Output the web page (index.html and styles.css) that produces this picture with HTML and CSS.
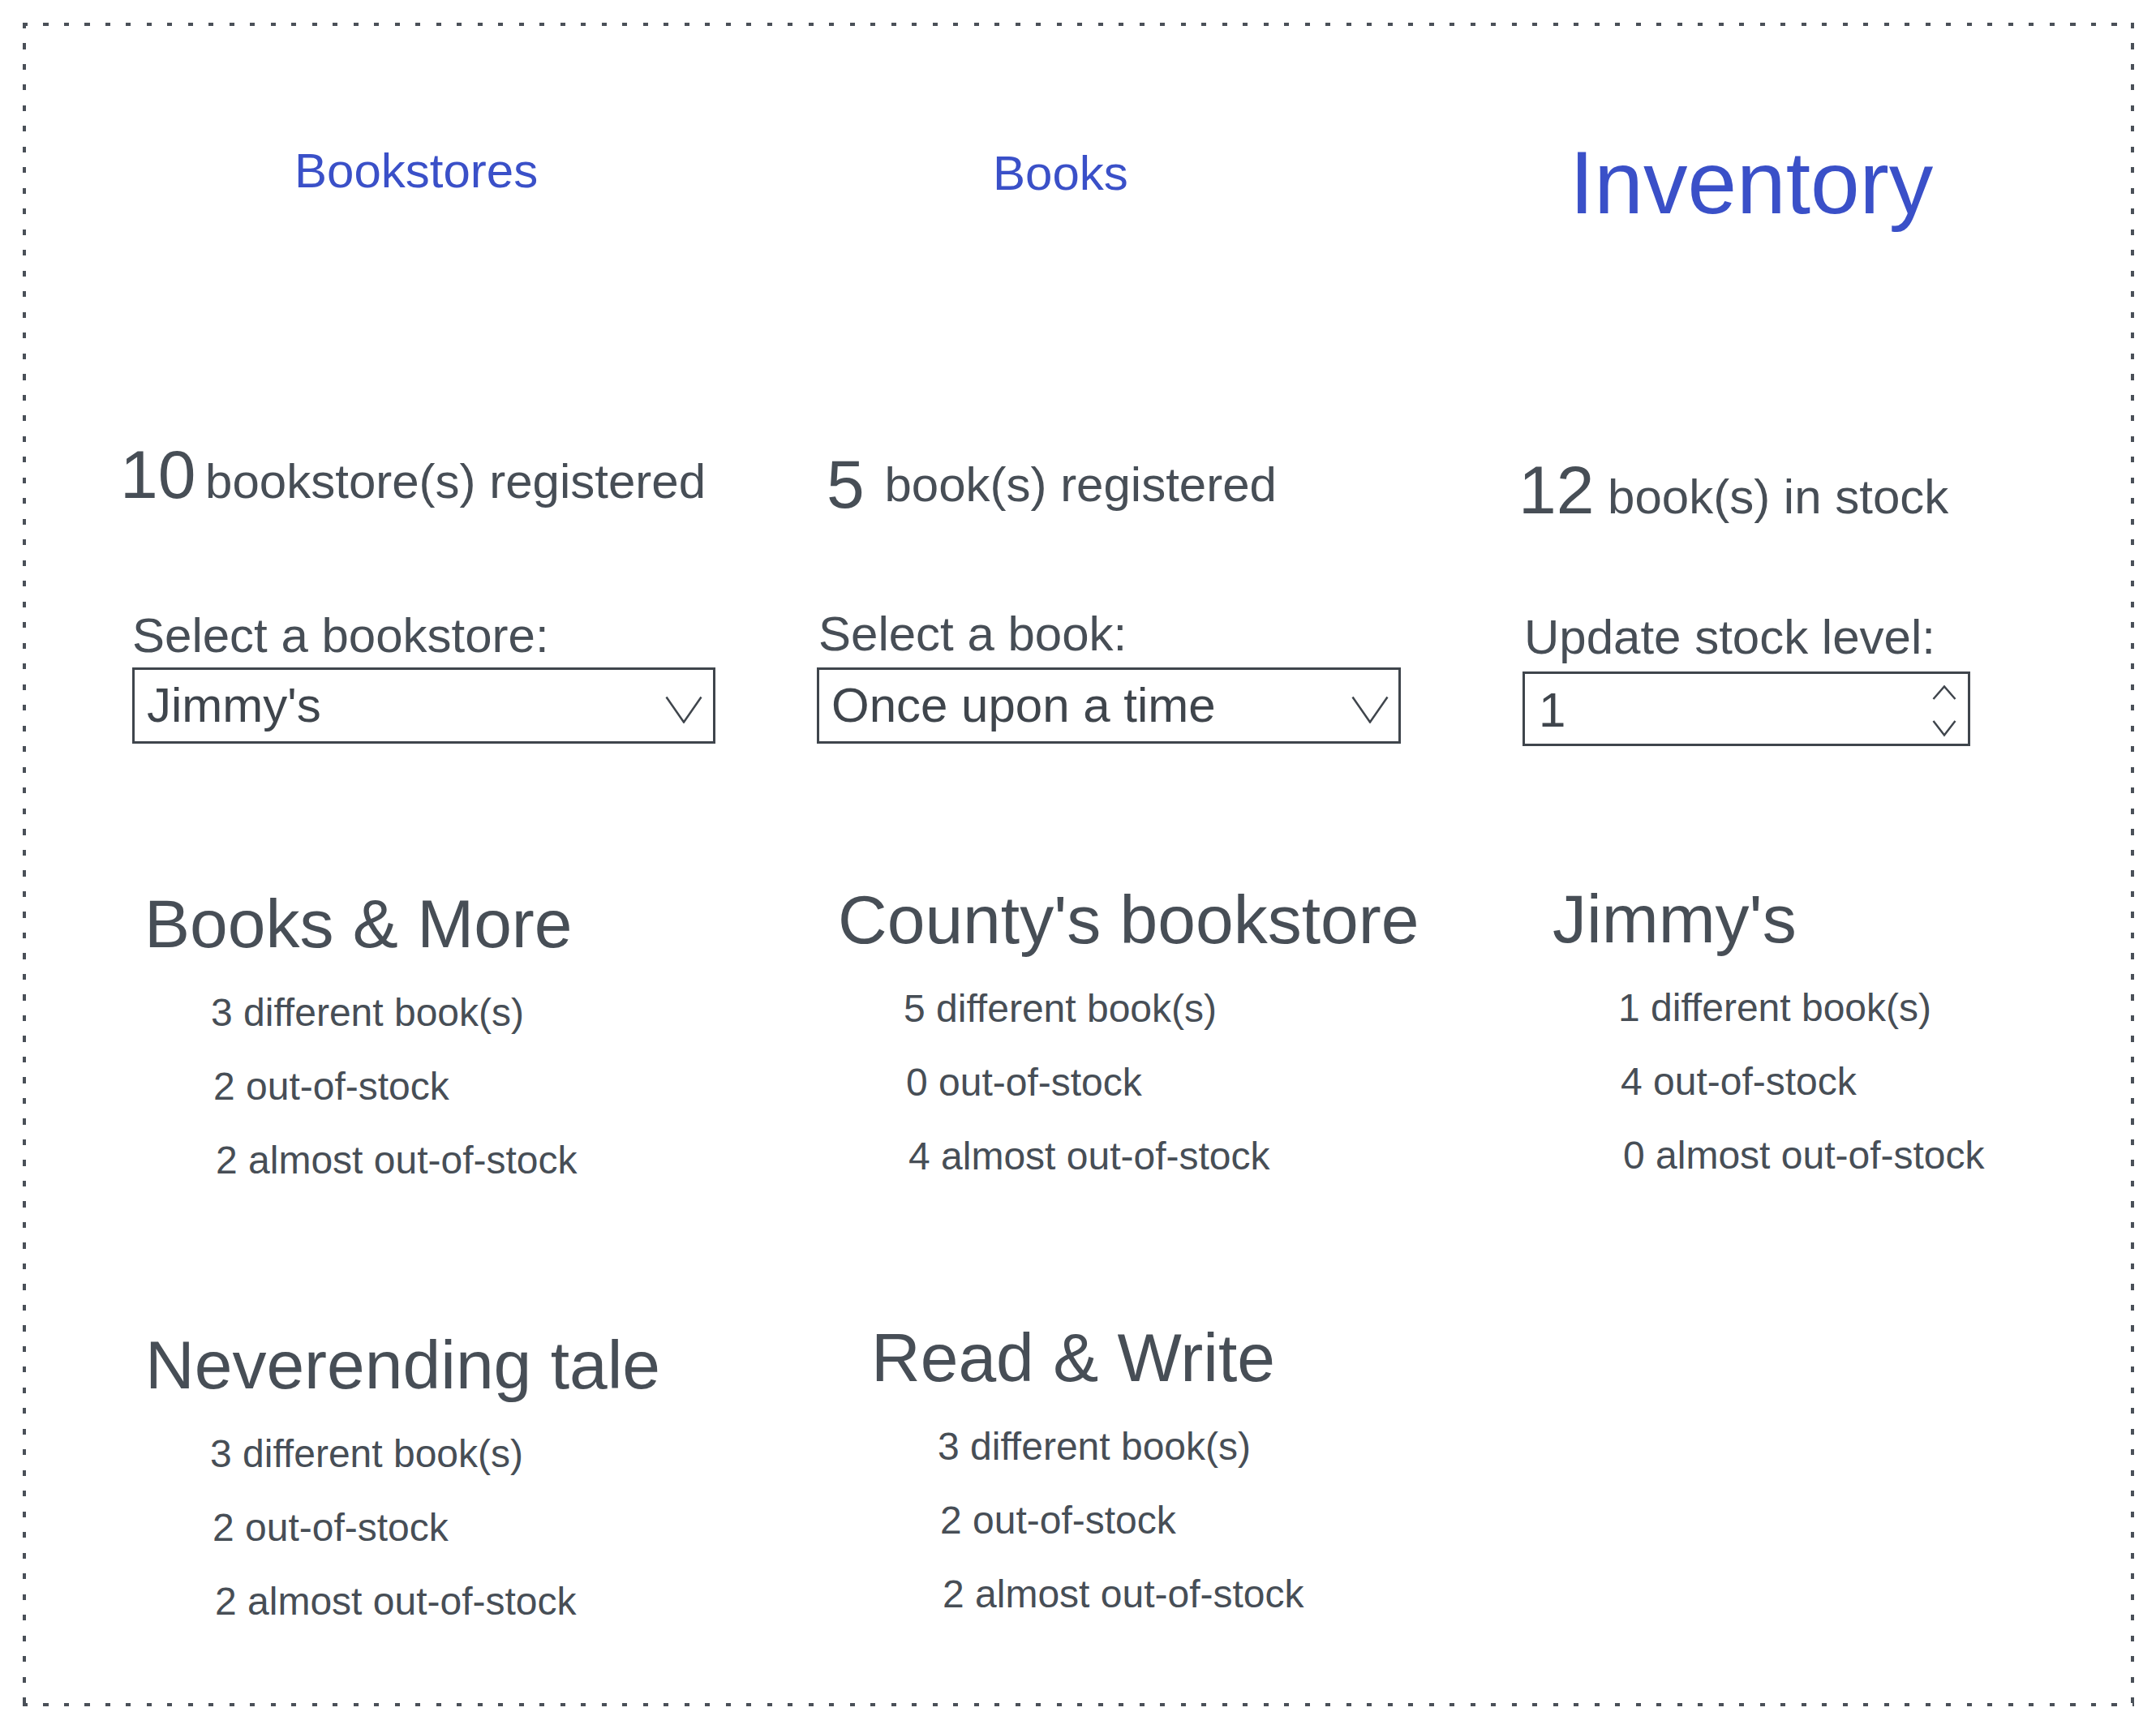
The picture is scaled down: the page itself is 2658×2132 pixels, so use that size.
FILE: index.html
```html
<!DOCTYPE html>
<html lang="en">
<head>
<meta charset="utf-8">
<title>Bookstore inventory</title>
<link rel="stylesheet" href="styles.css">
</head>
<body>
<main class="frame">
  <section class="col col--stores">
    <a class="tab" href="#">Bookstores</a>
    <p class="stat"><span class="num">10</span> bookstore(s) registered</p>
    <label class="label">Select a bookstore:</label>
    <div class="select">
      <span class="value">Jimmy's</span>
      <svg class="chev" width="46" height="34" viewBox="0 0 46 34"><polyline points="1.5,1.5 23,32.5 44.5,1.5"/></svg>
    </div>
    <article class="store store--a">
      <h2>Books &amp; More</h2>
      <ul class="facts">
        <li>3 different book(s)</li>
        <li>2 out-of-stock</li>
        <li>2 almost out-of-stock</li>
      </ul>
    </article>
    <article class="store store--b">
      <h2>Neverending tale</h2>
      <ul class="facts">
        <li>3 different book(s)</li>
        <li>2 out-of-stock</li>
        <li>2 almost out-of-stock</li>
      </ul>
    </article>
  </section>

  <section class="col col--books">
    <a class="tab" href="#">Books</a>
    <p class="stat"><span class="num">5</span> book(s) registered</p>
    <label class="label">Select a book:</label>
    <div class="select">
      <span class="value">Once upon a time</span>
      <svg class="chev" width="46" height="34" viewBox="0 0 46 34"><polyline points="1.5,1.5 23,32.5 44.5,1.5"/></svg>
    </div>
    <article class="store store--c">
      <h2>County's bookstore</h2>
      <ul class="facts">
        <li>5 different book(s)</li>
        <li>0 out-of-stock</li>
        <li>4 almost out-of-stock</li>
      </ul>
    </article>
    <article class="store store--d">
      <h2>Read &amp; Write</h2>
      <ul class="facts">
        <li>3 different book(s)</li>
        <li>2 out-of-stock</li>
        <li>2 almost out-of-stock</li>
      </ul>
    </article>
  </section>

  <section class="col col--inventory">
    <a class="tab tab--current" href="#">Inventory</a>
    <p class="stat"><span class="num">12</span> book(s) in stock</p>
    <label class="label">Update stock level:</label>
    <div class="number">
      <span class="value">1</span>
      <svg class="spin" width="30" height="64" viewBox="0 0 30 64"><polyline points="1.5,17 15,1.5 28.5,17"/><polyline points="1.5,44 15,61.5 28.5,44"/></svg>
    </div>
    <article class="store store--e">
      <h2>Jimmy's</h2>
      <ul class="facts">
        <li>1 different book(s)</li>
        <li>4 out-of-stock</li>
        <li>0 almost out-of-stock</li>
      </ul>
    </article>
  </section>
</main>
</body>
</html>
```

FILE: styles.css
```css
* {
  box-sizing: border-box;
  margin: 0;
  padding: 0;
}

html,
body {
  background: #ffffff;
}

body {
  font-family: "Liberation Sans", Arial, sans-serif;
  color: #474e56;
}

.frame {
  --dot: #4a5058;
  margin: 28px;
  width: 2603px;
  height: 2076px;
  padding-left: 92px;
  display: grid;
  grid-template-columns: 860px 860px 1fr;
  align-items: start;
  background:
    repeating-linear-gradient(to right, var(--dot) 0 6px, transparent 6px 25.5px) left top / 100% 4px no-repeat,
    repeating-linear-gradient(to right, var(--dot) 0 6px, transparent 6px 25.5px) left bottom / 100% 4px no-repeat,
    repeating-linear-gradient(to bottom, var(--dot) 0 7px, transparent 7px 25.5px) left top / 4px 100% no-repeat,
    repeating-linear-gradient(to bottom, var(--dot) 0 7px, transparent 7px 25.5px) right top / 4px 100% no-repeat;
}

.col {
  display: flex;
  flex-direction: column;
  align-items: flex-start;
  white-space: nowrap;
}

.tab {
  font-size: 60px;
  line-height: 1;
  color: #3a50c8;
  text-decoration: none;
}

.tab--current {
  font-size: 109px;
}

.stat {
  font-size: 60px;
  line-height: 1;
}

.stat .num {
  font-size: 84px;
}

.label {
  font-size: 60px;
  line-height: 1;
}

.select,
.number {
  display: flex;
  justify-content: space-between;
  align-items: center;
  border: 3px solid #3f454c;
  font-size: 60px;
  line-height: 1;
  color: #3f454c;
}

.select {
  height: 94px;
  padding: 0 13px 0 15px;
}

.chev {
  margin-top: 10px;
  fill: none;
  stroke: #3f454c;
  stroke-width: 2.5;
}

.number {
  height: 92px;
  padding: 4px 14px 0 17px;
}

.spin {
  align-self: flex-start;
  margin-top: 10px;
  fill: none;
  stroke: #3f454c;
  stroke-width: 2.5;
}

.store {
  display: flex;
  flex-direction: column;
  align-items: flex-start;
}

.store h2 {
  font-size: 84px;
  line-height: 1;
  font-weight: normal;
}

.facts {
  list-style: none;
  display: flex;
  flex-direction: column;
  align-items: flex-start;
  gap: 43px;
  margin-top: 44px;
  font-size: 48px;
  line-height: 1;
}

.facts li:nth-child(2) {
  margin-left: 3px;
}

.facts li:nth-child(3) {
  margin-left: 6px;
}

/* column 1: bookstores */
.col--stores .tab { margin: 153px 0 0 243px; }
.col--stores .stat { margin: 302px 0 0 28px; }
.col--stores .stat .num { margin-right: -5px; }
.col--stores .label { margin: 127px 0 0 43px; }
.col--stores .select { margin: 9px 0 0 43px; width: 719px; }

.store--a { margin-top: 180px; }
.store--a h2 { margin-left: 58px; }
.store--a .facts { padding-left: 140px; }

.store--b { margin-top: 186px; }
.store--b h2 { margin-left: 59px; }
.store--b .facts { padding-left: 139px; }

/* column 2: books */
.col--books .tab { margin: 156px 0 0 244px; }
.col--books .stat { margin: 311px 0 0 39px; }
.col--books .stat .num { vertical-align: -8px; margin-right: 8px; }
.col--books .label { margin: 113px 0 0 29px; }
.col--books .select { margin: 11px 0 0 27px; width: 720px; padding-right: 12px; }

.store--c { margin-top: 175px; }
.store--c h2 { margin-left: 53px; }
.store--c .facts { padding-left: 134px; }

.store--d { margin-top: 182px; }
.store--d h2 { margin-left: 94px; }
.store--d .facts { padding-left: 176px; }

/* column 3: inventory */
.col--inventory .tab { margin: 143px 0 0 95px; }
.col--inventory .stat { margin: 282px 0 0 32px; }
.col--inventory .label { margin: 110px 0 0 39px; }
.col--inventory .number { margin: 12px 0 0 37px; width: 552px; }

.store--e { margin-top: 171px; }
.store--e h2 { margin-left: 74px; }
.store--e .facts { padding-left: 155px; }
```
